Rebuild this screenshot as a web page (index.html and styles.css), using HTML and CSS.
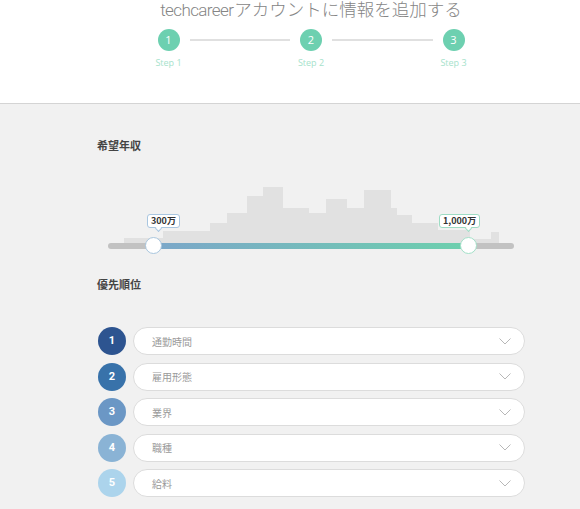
FILE: index.html
```html
<!DOCTYPE html>
<html lang="ja">
<head>
  <meta charset="UTF-8">
  <meta name="viewport" content="width=device-width, initial-scale=1.0">
  <title>techcareerアカウントに情報を追加する</title>
  <link rel="stylesheet" href="styles.css">
</head>
<body>
  <header class="header">
    <div class="wrap">
      <h1 class="title"><span class="brand">techcareer</span>アカウントに情報を追加する</h1>
      <div class="steps">
        <div class="step">
          <span class="step-num">1</span>
          <span class="step-label">Step 1</span>
        </div>
        <div class="step-line"></div>
        <div class="step">
          <span class="step-num">2</span>
          <span class="step-label">Step 2</span>
        </div>
        <div class="step-line"></div>
        <div class="step">
          <span class="step-num">3</span>
          <span class="step-label">Step 3</span>
        </div>
      </div>
    </div>
  </header>

  <main class="wrap">
    <h2 class="section-title income-title">希望年収</h2>

    <div class="salary">
      <div class="histogram">
        <span class="bar" style="width:39px;height:5px"></span>
        <span class="bar" style="width:47px;height:12px"></span>
        <span class="bar" style="width:17px;height:20px"></span>
        <span class="bar" style="width:20px;height:30px"></span>
        <span class="bar" style="width:16px;height:47px"></span>
        <span class="bar" style="width:20px;height:56px"></span>
        <span class="bar" style="width:26px;height:35px"></span>
        <span class="bar" style="width:17px;height:30px"></span>
        <span class="bar" style="width:21px;height:44px"></span>
        <span class="bar" style="width:17px;height:35px"></span>
        <span class="bar" style="width:27px;height:53px"></span>
        <span class="bar" style="width:6px;height:35px"></span>
        <span class="bar" style="width:15px;height:28px"></span>
        <span class="bar" style="width:26px;height:20px"></span>
        <span class="bar" style="width:32px;height:13px"></span>
        <span class="bar" style="width:21px;height:4px"></span>
        <span class="bar" style="width:8px;height:11px"></span>
      </div>
      <div class="track">
        <div class="track-fill" style="left:45px;width:316px"></div>
        <span class="thumb thumb-min" style="left:46px"></span>
        <span class="thumb thumb-max" style="left:361px"></span>
        <span class="tip tip-min" style="left:39px">300万</span>
        <span class="tip tip-max" style="left:331px">1,000万</span>
      </div>
    </div>

    <h2 class="section-title priority-title">優先順位</h2>

    <ol class="priorities">
      <li class="priority">
        <span class="rank rank-1">1</span>
        <div class="pill"><span>通勤時間</span><svg class="chevron" width="12" height="7" viewBox="0 0 12 7"><polyline points="0.5,0.5 6,6 11.5,0.5"/></svg></div>
      </li>
      <li class="priority">
        <span class="rank rank-2">2</span>
        <div class="pill"><span>雇用形態</span><svg class="chevron" width="12" height="7" viewBox="0 0 12 7"><polyline points="0.5,0.5 6,6 11.5,0.5"/></svg></div>
      </li>
      <li class="priority">
        <span class="rank rank-3">3</span>
        <div class="pill"><span>業界</span><svg class="chevron" width="12" height="7" viewBox="0 0 12 7"><polyline points="0.5,0.5 6,6 11.5,0.5"/></svg></div>
      </li>
      <li class="priority">
        <span class="rank rank-4">4</span>
        <div class="pill"><span>職種</span><svg class="chevron" width="12" height="7" viewBox="0 0 12 7"><polyline points="0.5,0.5 6,6 11.5,0.5"/></svg></div>
      </li>
      <li class="priority">
        <span class="rank rank-5">5</span>
        <div class="pill"><span>給料</span><svg class="chevron" width="12" height="7" viewBox="0 0 12 7"><polyline points="0.5,0.5 6,6 11.5,0.5"/></svg></div>
      </li>
    </ol>
  </main>
</body>
</html>
```

FILE: styles.css
```css
body {
  margin: 0;
  background: #f1f1f1;
  font-family: "Noto Sans CJK JP", "Noto Sans", sans-serif;
  color: #444;
  overflow: hidden;
}
.wrap {
  width: 428px;
  margin-left: 97px;
}
.header {
  background: #fff;
  border-bottom: 1px solid #d4d4d4;
  height: 103px;
  overflow: hidden;
}
.title {
  margin: -4px 0 0;
  font-size: 17.5px;
  line-height: 26px;
  font-weight: 300;
  text-align: center;
  color: #858585;
  white-space: nowrap;
}
.brand {
  font-family: Roboto, sans-serif;
  font-weight: 300;
  font-size: 17px;
  letter-spacing: -0.6px;
  margin-right: 1px;
}
.steps {
  display: flex;
  align-items: flex-start;
  width: 307px;
  margin: 6px auto 0;
}
.step {
  display: flex;
  flex-direction: column;
  align-items: center;
  width: 22px;
}
.step-num {
  width: 22px;
  height: 22px;
  border-radius: 50%;
  background: #6dd0b0;
  color: #fff;
  font-family: "Open Sans", sans-serif;
  font-size: 11px;
  line-height: 22px;
  text-align: center;
}
.step-label {
  margin-top: 7px;
  font-family: "Open Sans", sans-serif;
  font-size: 9px;
  line-height: 10px;
  color: #a6e2cb;
  white-space: nowrap;
}
.step-line {
  flex: 1;
  height: 2px;
  margin: 10px 10px 0;
  background: #e0e0e0;
}
.section-title {
  margin: 0;
  font-size: 11px;
  line-height: 14px;
  font-weight: bold;
  color: #444;
}
.income-title {
  margin-top: 34px;
}
.salary {
  margin: 35px 11px 0;
}
.histogram {
  display: flex;
  align-items: flex-end;
  height: 56px;
  padding-left: 16px;
}
.bar {
  display: block;
  background: #e1e1e1;
}
.track {
  position: relative;
  height: 6px;
  border-radius: 3px;
  background: #c2c2c2;
}
.track-fill {
  position: absolute;
  top: 0;
  bottom: 0;
  background: linear-gradient(to right, #7ba6c9, #6dd0ad);
}
.thumb {
  position: absolute;
  top: -6px;
  width: 17px;
  height: 17px;
  margin-left: -9px;
  box-sizing: border-box;
  border-radius: 50%;
  background: #fff;
}
.thumb-min {
  border: 1px solid #a9c6de;
}
.thumb-max {
  border: 1px solid #a3e0c8;
}
.tip {
  position: absolute;
  top: -29px;
  height: 14px;
  padding: 0 3px;
  box-sizing: border-box;
  border-radius: 3px;
  background: #fff;
  font-size: 9px;
  line-height: 12px;
  font-weight: bold;
  color: #333;
  white-space: nowrap;
}
.tip::after {
  content: "";
  position: absolute;
  bottom: -4px;
  width: 5px;
  height: 5px;
  background: #fff;
  transform: rotate(45deg);
  box-sizing: border-box;
}
.tip-min {
  border: 1px solid #a9c6e0;
}
.tip-min::after {
  left: 8px;
  border-right: 1px solid #a9c6e0;
  border-bottom: 1px solid #a9c6e0;
}
.tip-max {
  border: 1px solid #9edcc4;
}
.tip-max::after {
  left: 26px;
  border-right: 1px solid #9edcc4;
  border-bottom: 1px solid #9edcc4;
}
.priority-title {
  margin-top: 28px;
}
.priorities {
  list-style: none;
  margin: 36px 0 0;
  padding: 0;
  display: flex;
  flex-direction: column;
  gap: 7.5px;
}
.priority {
  display: flex;
  align-items: center;
  gap: 7px;
}
.rank {
  flex: none;
  width: 28px;
  height: 28px;
  margin-left: 1px;
  border-radius: 50%;
  color: #fff;
  font-family: Roboto, sans-serif;
  font-weight: bold;
  font-size: 11px;
  line-height: 28px;
  text-align: center;
}
.rank-1 { background: #2d5490; }
.rank-2 { background: #3872aa; }
.rank-3 { background: #6b97c5; }
.rank-4 { background: #8ab3d5; }
.rank-5 { background: #acd4ec; }
.pill {
  flex: 1;
  display: flex;
  align-items: center;
  justify-content: space-between;
  height: 28px;
  box-sizing: border-box;
  padding: 0 13px 0 18px;
  border: 1px solid #dcdcdc;
  border-radius: 14px;
  background: #fff;
  font-size: 10px;
  color: #9a9a9a;
}
.chevron polyline {
  fill: none;
  stroke: #b8b8b8;
  stroke-width: 1;
}
```
